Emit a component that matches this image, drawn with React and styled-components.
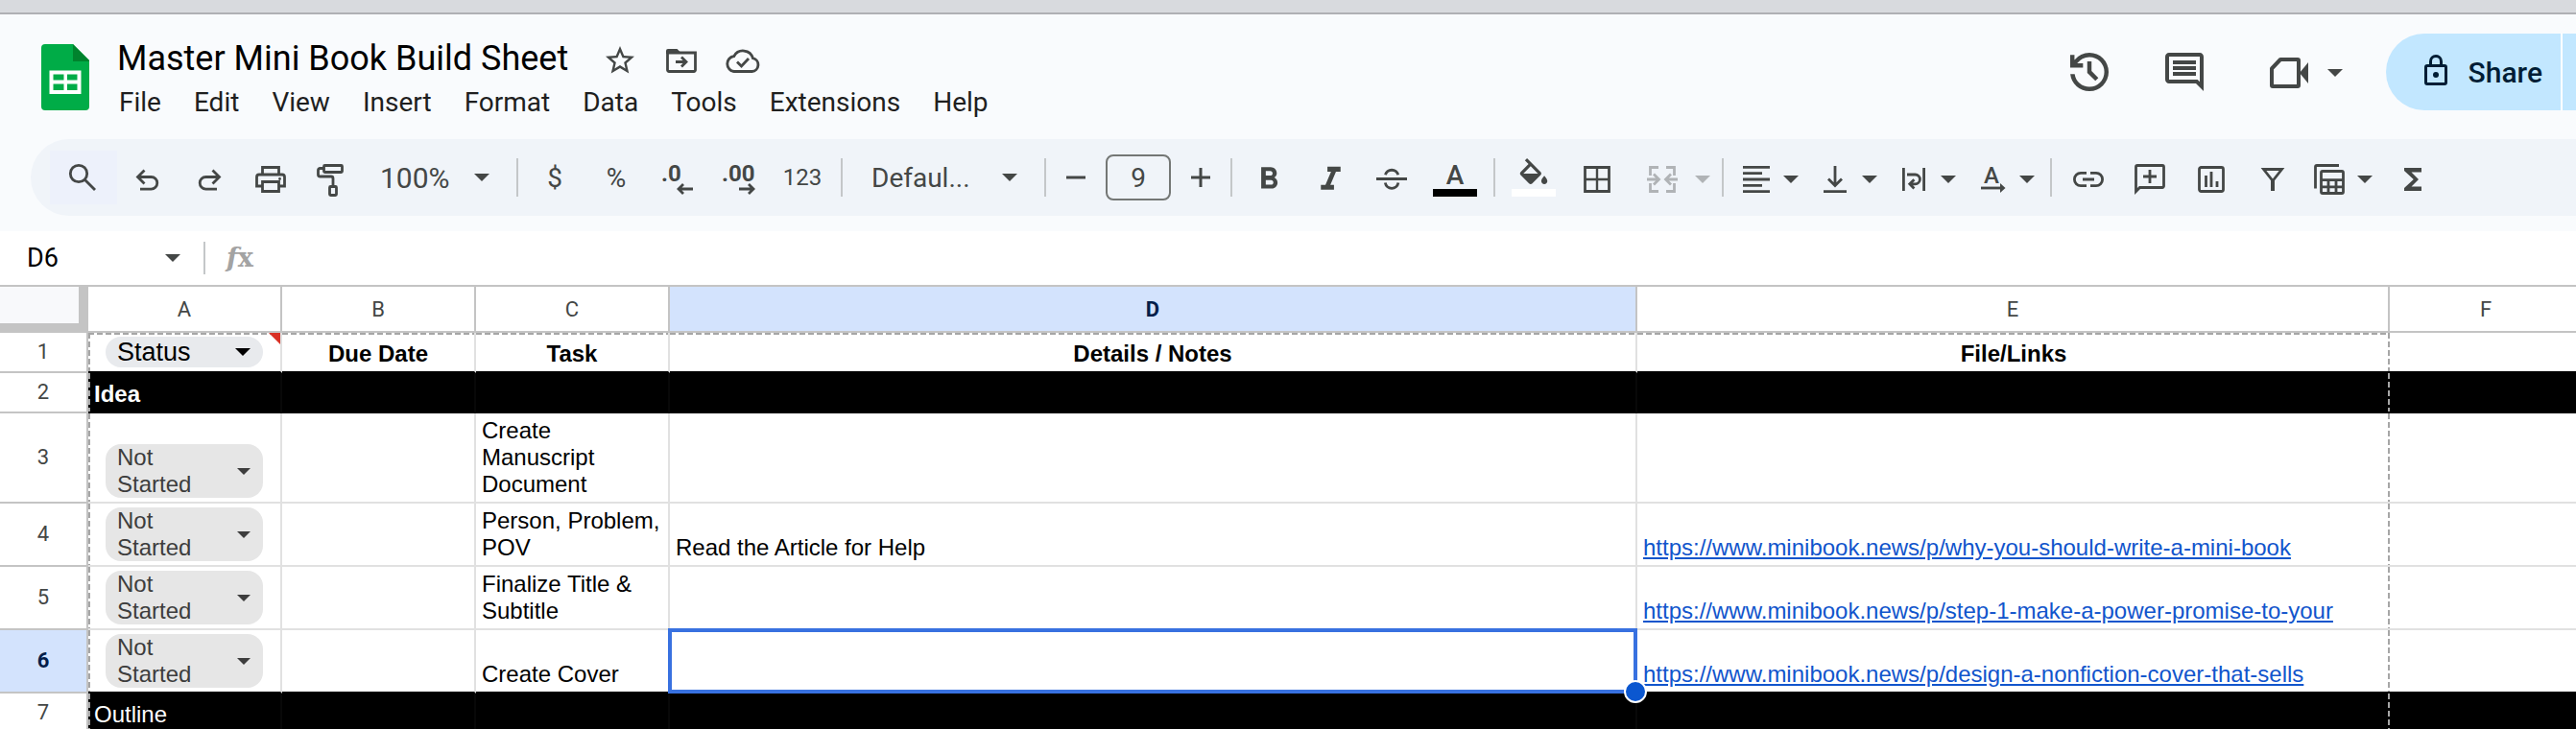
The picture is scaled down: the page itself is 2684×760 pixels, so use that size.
import React, { useState } from 'react';
import styled, { createGlobalStyle } from 'styled-components';
import { MdStarBorder, MdOutlineComment, MdFormatBold, MdFormatItalic, MdFunctions } from 'react-icons/md';

const menus = ['File', 'Edit', 'View', 'Insert', 'Format', 'Data', 'Tools', 'Extensions', 'Help'];

const rows = [
	{ n: 3, task: 'Create Manuscript Document' },
	{ n: 4, task: 'Person, Problem, POV', notes: 'Read the Article for Help', link: 'https://www.minibook.news/p/why-you-should-write-a-mini-book' },
	{ n: 5, task: 'Finalize Title & Subtitle', link: 'https://www.minibook.news/p/step-1-make-a-power-promise-to-your' },
	{ n: 6, task: 'Create Cover', link: 'https://www.minibook.news/p/design-a-nonfiction-cover-that-sells' },
];

const Glyph = styled.text`
	fill: currentColor;
	stroke: none;
	font-family: Roboto, sans-serif;
	font-size: 24px;
	font-weight: ${(p) => (p.$bold ? 700 : 500)};
`

// stroke icons on a 36 x 36 grid
const icons = {
	search: <><circle cx="13" cy="12" r="8.7" /><path d="M19 18l11 11" /></>,
	undo: <path d="M7.5 15.5H21.5a6.3 6.3 0 0 1 0 12.6H10M14.5 8.5l-7 7 7 7" />,
	redo: <path d="M28.5 15.5H14.5a6.3 6.3 0 0 0 0 12.6H26M21.5 8.5l7 7-7 7" />,
	print: <>
		<path d="M9.5 12.5V5.5H26.5V12.5M9.5 25H3.5V15.5a2.5 2.5 0 0 1 2.5-2.5H30a2.5 2.5 0 0 1 2.5 2.5V25H26.5" />
		<path d="M9.5 20.5h17v10h-17z" />
		<circle cx="27.5" cy="17.5" r="1.4" fill="currentColor" stroke="none" />
	</>,
	paint: <>
		<rect x="9.5" y="3.5" width="19" height="7" rx="1" />
		<path d="M9 6.5H5.5a2 2 0 0 0-2 2V13a2 2 0 0 0 2 2H17a2 2 0 0 1 2 2V25" />
		<rect x="15.5" y="25.5" width="7" height="9" rx="1" />
	</>,
	strike: <path d="M2 17.5H34M11.5 13.2a6.7 6 0 0 1 13.2 0M11.3 21.5a6.9 7 0 0 0 13.6 0" />,
	borders: <><path d="M5.5 5.5h25v25h-25z" /><path d="M18 5V31M5 18H31" strokeWidth="2.4" /></>,
	merge: <path d="M14 5.5H5.5V14M22 5.5H30.5V14M5.5 22V30.5H14M30.5 22V30.5H22M2 18H14M9 12.5l5.5 5.5-5.5 5.5M34 18H22M27 12.5l-5.5 5.5 5.5 5.5" />,
	align: <path d="M4 5.4H32M4 11.7H24M4 18H32M4 24.3H24M4 30.6H32" />,
	valign: <path d="M18 4V24M11 17.5l7 7 7-7M6 30.6H30" />,
	wrap: <path d="M7.4 6V30M28.6 6V30M11 13H19.5a4.9 4.9 0 0 1 0 9.8H14M18.4 18.2l-4.6 4.6 4.6 4.6" />,
	rotate: <>
		<Glyph x="17" y="22" textAnchor="middle">A</Glyph>
		<path d="M6 27H28" /><path d="M26 22l5.5 5-5.5 5z" fill="currentColor" stroke="none" />
	</>,
	lessDecimals: <><Glyph x="1" y="20" $bold>.0</Glyph><path d="M19.5 28H34M24 23l-5 5 5 5" /></>,
	moreDecimals: <><Glyph x="0" y="20" $bold>.00</Glyph><path d="M18 28H32.5M28 23l5 5-5 5" /></>,
	link: <path d="M16 11.4H10a6.6 6.6 0 0 0 0 13.2H16M20 11.4H26a6.6 6.6 0 0 1 0 13.2H20M12 18H24" />,
	addComment: <path d="M3.5 30.5V5a1.5 1.5 0 0 1 1.5-1.5H31A1.5 1.5 0 0 1 32.5 5V25a1.5 1.5 0 0 1-1.5 1.5H7.5ZM11 15H25M18 8V22" />,
	chart: <><rect x="5.5" y="5.5" width="25" height="25" rx="2" /><path d="M12.5 14V26M18 10V26M24 20V26" /></>,
	filter: <><path d="M8.5 7.5H27.5L18 19.5Z" /><path d="M18 19V30" strokeWidth="4" /></>,
	views: <>
		<path d="M2.5 27.5V5A1.5 1.5 0 0 1 4 3.5H27" />
		<rect x="8.5" y="9.5" width="23" height="23" rx="1.5" />
		<path d="M8 18.6H32M8 25.8H32M16 18V33M24 18V33" />
	</>,
};

function Icon({ name }) {
	return <StrokeSvg viewBox="0 0 36 36" aria-hidden="true">{icons[name]}</StrokeSvg>;
}

function Tool({ icon, label, children, ...rest }) {
	return (
		<ToolButton type="button" aria-label={label} {...rest}>
			{icon ? <Icon name={icon} /> : children}
		</ToolButton>
	);
}

function SplitTool({ icon, label, wide, disabled }) {
	return (
		<SplitButton type="button" aria-label={label} $wide={wide} disabled={disabled}>
			<Icon name={icon} />
			<Caret />
		</SplitButton>
	);
}

function Header() {
	return (
		<HeaderBar>
			<Logo viewBox="0 0 50 69" aria-label="Sheets">
				<path fill="#00ac47" d="M4 0H33L50 17V65a4 4 0 0 1-4 4H4a4 4 0 0 1-4-4V4a4 4 0 0 1 4-4Z" />
				<path fill="#00832d" d="M33 0L50 17V18H33Z" />
				<path fill="#fff" fillRule="evenodd" d="M8.5 27.5h33v24.5h-33ZM12.5 31.5v6h11v-6ZM27 31.5v6h10.5v-6ZM12.5 41.5v6.5h11v-6.5ZM27 41.5v6.5h10.5v-6.5Z" />
			</Logo>
			<Heading>
				<TitleRow>
					<Title>Master Mini Book Build Sheet</Title>
					<TitleButton type="button" aria-label="Star"><MdStarBorder size={36} /></TitleButton>
					<TitleButton type="button" aria-label="Move">
						<StrokeSvg viewBox="0 0 36 36">
							<path d="M3.5 27V10H32.5V28a1.5 1.5 0 0 1-1.5 1.5H5a1.5 1.5 0 0 1-1.5-1.5Z" />
							<path d="M2 11V8a2 2 0 0 1 2-2H13.5l4 4Z" fill="currentColor" stroke="none" />
							<path d="M12 19.5H22M18 14.5l5 5-5 5" />
						</StrokeSvg>
					</TitleButton>
					<TitleButton type="button" aria-label="Document status">
						<StrokeSvg viewBox="0 0 36 36">
							<path d="M9 29.5H27.5a7 7 0 0 0 1-13.8A10.7 10.7 0 0 0 8.8 13.6A8 8 0 0 0 9 29.5Z" />
							<path d="M12 19.5l4.5 4.5 7.5-8" />
						</StrokeSvg>
					</TitleButton>
				</TitleRow>
				<Menu>
					{menus.map((m) => <MenuItem key={m} type="button">{m}</MenuItem>)}
				</Menu>
			</Heading>
			<Actions>
				<ActionButton type="button" aria-label="Version history">
					<svg width="40" height="40" viewBox="120 -840 720 720" fill="currentColor">
						<path d="M480-120q-138 0-240.5-91.5T122-440h82q14 104 92.5 172T480-200q117 0 198.5-81.5T760-480q0-117-81.5-198.5T480-760q-69 0-129 32t-101 88h110v80H120v-240h80v94q51-64 124.5-99T480-840q75 0 140.5 28.5t114 77q48.5 48.5 77 114T840-480q0 75-28.5 140.5t-77 114q-48.5 48.5-114 77T480-120Zm112-192L440-464v-216h80v184l128 128-56 56Z" />
					</svg>
				</ActionButton>
				<ActionButton type="button" aria-label="Comments"><MdOutlineComment size={48} /></ActionButton>
				<MeetButton type="button" aria-label="Join a call">
					<svg width="42" height="34" viewBox="0 0 42 34" fill="none" stroke="currentColor" strokeWidth="4" strokeLinejoin="round">
						<path d="M12 3H30a1 1 0 0 1 1 1V30a1 1 0 0 1-1 1H4a1 1 0 0 1-1-1V12.5Z" />
						<path d="M32 17L41 6V28Z" fill="currentColor" stroke="none" />
					</svg>
					<Caret />
				</MeetButton>
				<ShareButton type="button">
					<svg width="24" height="32" viewBox="0 0 24 32" fill="none" stroke="currentColor" strokeWidth="3">
						<rect x="1.5" y="11.5" width="21" height="19" rx="1.5" />
						<path d="M6.5 11V7a5.5 5.5 0 0 1 11 0V11" />
						<circle cx="12" cy="21" r="3" fill="currentColor" stroke="none" />
					</svg>
					Share
				</ShareButton>
				<ShareMore type="button" aria-label="Sharing options" />
			</Actions>
		</HeaderBar>
	);
}

function Toolbar() {
	const [size, setSize] = useState('9');

	return (
		<ToolbarPill role="toolbar">
			<Tool icon="search" label="Search the menus" $width={70} $tint />
			<Tool icon="undo" label="Undo" />
			<Tool icon="redo" label="Redo" />
			<Tool icon="print" label="Print" />
			<Tool icon="paint" label="Paint format" />
			<SelectBox $width={154}>
				<ZoomSelect aria-label="Zoom" defaultValue="100%"><option>100%</option></ZoomSelect>
				<Caret />
			</SelectBox>
			<Divider />
			<TextTool type="button">$</TextTool>
			<TextTool type="button">%</TextTool>
			<Tool icon="lessDecimals" label="Decrease decimal places" />
			<Tool icon="moreDecimals" label="Increase decimal places" />
			<TextTool type="button" $small>123</TextTool>
			<Divider />
			<SelectBox $width={198}>
				<FontSelect aria-label="Font" defaultValue="Defaul..."><option>Defaul...</option></FontSelect>
				<Caret />
			</SelectBox>
			<Divider />
			<StepButton type="button" aria-label="Decrease font size">
				<svg width="20" height="20" viewBox="0 0 20 20"><path d="M0 10H20" stroke="currentColor" strokeWidth="3" /></svg>
			</StepButton>
			<SizeInput aria-label="Font size" value={size} onChange={(e) => setSize(e.target.value)} />
			<StepButton type="button" aria-label="Increase font size">
				<svg width="20" height="20" viewBox="0 0 20 20"><path d="M0 10H20M10 0V20" stroke="currentColor" strokeWidth="3" /></svg>
			</StepButton>
			<Divider />
			<Tool label="Bold"><MdFormatBold size={38} /></Tool>
			<Tool label="Italic"><MdFormatItalic size={41} /></Tool>
			<Tool icon="strike" label="Strikethrough" />
			<ColorButton type="button" aria-label="Text color" $color="#000">
				<ColorLetter>A</ColorLetter>
			</ColorButton>
			<Divider />
			<ColorButton type="button" aria-label="Fill color" $color="#fff">
				<svg width="38" height="27" viewBox="0 0 24 17" fill="currentColor">
					<path d="M16.56 8.94L7.62 0 6.21 1.41l2.38 2.38-5.15 5.15c-.59.59-.59 1.54 0 2.12l5.5 5.5c.29.29.68.44 1.06.44s.77-.15 1.06-.44l5.5-5.5c.59-.58.59-1.53 0-2.12zM5.21 10L10 5.21 14.79 10H5.21zM19 11.5s-2 2.17-2 3.5c0 1.1.9 2 2 2s2-.9 2-2c0-1.33-2-3.5-2-3.5z" />
				</svg>
			</ColorButton>
			<Tool icon="borders" label="Borders" />
			<SplitTool icon="merge" label="Merge cells" wide disabled />
			<Divider />
			<SplitTool icon="align" label="Horizontal align" />
			<SplitTool icon="valign" label="Vertical align" />
			<SplitTool icon="wrap" label="Text wrapping" />
			<SplitTool icon="rotate" label="Text rotation" />
			<Divider />
			<Tool icon="link" label="Insert link" />
			<Tool icon="addComment" label="Insert comment" />
			<Tool icon="chart" label="Insert chart" />
			<Tool icon="filter" label="Create a filter" />
			<SplitTool icon="views" label="Table views" />
			<Tool label="Functions"><MdFunctions size={36} /></Tool>
		</ToolbarPill>
	);
}

function BlackRow({ n, title, bold }) {
	return (
		<tr>
			<RowHead scope="row">{n}</RowHead>
			<Cell $black $bold={bold} $dashLeft>{title}</Cell>
			<Cell $black /><Cell $black /><Cell $black />
			<Cell $black $dashRight /><Cell $black />
		</tr>
	);
}

function Sheet() {
	return (
		<SheetWrap>
			<Table>
				<colgroup>
					<Col $w={92} /><Col $w={202} /><Col $w={202} /><Col $w={202} />
					<Col $w={1008} /><Col $w={784} /><col />
				</colgroup>
				<thead>
					<tr>
						<Corner />
						{['A', 'B', 'C', 'D', 'E', 'F'].map((c) => (
							<ColHead key={c} scope="col" $active={c === 'D'}>{c}</ColHead>
						))}
					</tr>
				</thead>
				<tbody>
					<tr>
						<RowHead scope="row">1</RowHead>
						<Cell $dashTop $dashLeft $chip $last>
							<StatusChip type="button">Status<Caret /></StatusChip>
							<NoteMark />
						</Cell>
						<Cell $dashTop $center $bold $last>Due Date</Cell>
						<Cell $dashTop $center $bold $last>Task</Cell>
						<Cell $dashTop $center $bold $last>Details / Notes</Cell>
						<Cell $dashTop $dashRight $center $bold $last>File/Links</Cell>
						<Cell $last />
					</tr>
					<BlackRow n={2} title="Idea" bold />
					{rows.map((r) => {
						const last = r.n === 6;
						return (
							<tr key={r.n}>
								<RowHead scope="row" $active={last}>{r.n}</RowHead>
								<Cell $dashLeft $chip $last={last}>
									<Chip type="button"><span>Not Started</span><Caret $small /></Chip>
								</Cell>
								<Cell $last={last} />
								<Cell $last={last}>{r.task}</Cell>
								<Cell $last={last}>
									{r.notes}
									{last && <Selection />}
								</Cell>
								<Cell $dashRight $last={last}>
									{r.link && <CellLink href={r.link}>{r.link}</CellLink>}
								</Cell>
								<Cell $last={last} />
							</tr>
						);
					})}
					<BlackRow n={7} title="Outline" />
				</tbody>
			</Table>
		</SheetWrap>
	);
}

function App() {
	return (
		<Page>
			<GlobalStyle />
			<WindowEdge />
			<Header />
			<Toolbar />
			<FormulaBar>
				<NameBox aria-label="Name box" defaultValue="D6" />
				<Caret />
				<FormulaDivider />
				<Fx><i>f</i>x</Fx>
			</FormulaBar>
			<Sheet />
		</Page>
	);
}

export default App;

const GlobalStyle = createGlobalStyle`
	* {
		box-sizing: border-box;
	}
	body {
		margin: 0;
		background: #f9fbfd;
	}
	button, select, input {
		font: inherit;
		color: inherit;
		border: none;
		background: none;
		padding: 0;
		margin: 0;
	}
	svg {
		display: block;
		flex: none;
	}
`

const Page = styled.div`
	display: flex;
	flex-direction: column;
	height: 100vh;
	overflow: hidden;
	font-family: Roboto, "Liberation Sans", sans-serif;
	font-size: 28px;
	color: #444746;
`

const WindowEdge = styled.div`
	flex: none;
	height: 15px;
	background: #d8dade;
	border-bottom: 2px solid #afb0b4;
`

const StrokeSvg = styled.svg`
	width: 36px;
	height: 36px;
	fill: none;
	stroke: currentColor;
	stroke-width: 2.8;
	overflow: visible;
`

const Caret = styled.span`
	flex: none;
	width: 0;
	height: 0;
	border-style: solid;
	border-width: ${(p) => (p.$small ? '7px 7px 0' : '8px 8px 0')};
	border-color: currentColor transparent transparent;
`

const HeaderBar = styled.header`
	flex: none;
	display: flex;
	align-items: flex-start;
	padding: 20px 0 20px 43px;
`

const Logo = styled.svg`
	width: 50px;
	height: 69px;
	margin-top: 11px;
`

const Heading = styled.div`
	padding: 4px 0 0 28px;
`

const TitleRow = styled.div`
	display: flex;
	align-items: center;
	margin-bottom: 6px;
`

const Title = styled.h1`
	margin: 0 22px 0 0;
	padding-left: 1px;
	font-size: 36px;
	line-height: 44px;
	font-weight: 400;
	color: #000;
	white-space: nowrap;
`

const TitleButton = styled.button`
	display: flex;
	justify-content: center;
	padding-top: 4px;
	width: 64px;
`

const Menu = styled.nav`
	display: flex;
	gap: 34px;
	padding-left: 3px;
`

const MenuItem = styled.button`
	line-height: 36px;
	color: #1f1f1f;
`

const Actions = styled.div`
	display: flex;
	align-items: center;
	margin-left: auto;
`

const ActionButton = styled.button`
	display: flex;
	align-items: center;
	justify-content: center;
	width: 99px;
	height: 80px;
`

const MeetButton = styled.button`
	display: flex;
	align-items: center;
	gap: 19px;
	padding: 2px 45px 0 38px;
`

const ShareButton = styled.button`
	display: flex;
	align-items: center;
	gap: 22px;
	height: 80px;
	padding: 0 19px 0 40px;
	border-radius: 40px 0 0 40px;
	background: #c2e7ff;
	color: #001d35;
	font-size: 30px;
	font-weight: 500;

	svg {
		margin-bottom: 4px;
	}
`

const ShareMore = styled.button`
	width: 16px;
	height: 80px;
	background: #c2e7ff;
	border-left: 2px solid #fff;
`

const ToolbarPill = styled.div`
	flex: none;
	display: flex;
	align-items: center;
	height: 80px;
	margin: 0 0 16px 32px;
	padding-left: 20px;
	border-radius: 40px 0 0 40px;
	background: #f0f4f9;
`

const ToolButton = styled.button`
	flex: none;
	display: flex;
	align-items: center;
	justify-content: center;
	width: ${(p) => p.$width || 64}px;
	height: 56px;
	padding-top: 4px;
	background: ${(p) => (p.$tint ? '#edf1fb' : 'none')};
`

const TextTool = styled.button`
	flex: none;
	width: ${(p) => (p.$small ? 68 : 64)}px;
	height: 56px;
	font-size: ${(p) => (p.$small ? 24 : 28)}px;
`

const SplitButton = styled.button`
	flex: none;
	display: flex;
	align-items: center;
	gap: ${(p) => (p.$wide ? 16 : 10)}px;
	height: 56px;
	padding: ${(p) => (p.$wide ? '4px 6px 0 18px' : '4px 10px 0')};

	&:disabled {
		color: #b0b3b6;
	}
`

const Divider = styled.span`
	flex: none;
	width: 2px;
	height: 40px;
	margin: 0 6px;
	background: #c4c7c9;
`

const SelectBox = styled.span`
	flex: none;
	display: flex;
	align-items: center;
	width: ${(p) => p.$width}px;
	padding-right: 22px;
`

const ZoomSelect = styled.select`
	appearance: none;
	flex: 1;
	min-width: 0;
	padding-left: 18px;
	font-size: 30px;
`

const FontSelect = styled.select`
	appearance: none;
	flex: 1;
	min-width: 0;
	padding-left: 24px;
`

const StepButton = styled.button`
	flex: none;
	display: flex;
	align-items: center;
	justify-content: center;
	width: 50px;
	height: 56px;
`

const SizeInput = styled.input`
	flex: none;
	width: 68px;
	height: 48px;
	margin: 0 6px;
	border: 2px solid #747775;
	border-radius: 8px;
	text-align: center;
`

const ColorButton = styled.button`
	flex: none;
	display: flex;
	flex-direction: column;
	align-items: center;
	width: 68px;

	&::after {
		content: '';
		width: 46px;
		height: 8px;
		margin-top: 5px;
		background: ${(p) => p.$color};
	}
`

const ColorLetter = styled.span`
	height: 27px;
	line-height: 35px;
	font-weight: 500;
`

const FormulaBar = styled.div`
	flex: none;
	display: flex;
	align-items: center;
	height: 56px;
	background: #fff;
`

const NameBox = styled.input`
	width: 172px;
	padding-left: 28px;
	font-size: 27px;
	color: #000;
`

const FormulaDivider = styled.span`
	width: 2px;
	height: 34px;
	margin: 0 22px 0 24px;
	background: #c4c7c9;
`

const Fx = styled.span`
	font-family: "DejaVu Serif", serif;
	font-size: 27px;
	line-height: 36px;
	font-weight: 700;
	color: #a3a3a3;
`

const SheetWrap = styled.main`
	flex: 1;
	min-height: 0;
	overflow: hidden;
	background: #fff;
	border-top: 2px solid #c4c4c4;
`

// the last column runs on past the window edge
const Table = styled.table`
	width: calc(100% + 8px);
	table-layout: fixed;
	border-spacing: 0;
`

const Col = styled.col`
	width: ${(p) => p.$w}px;
`

const Corner = styled.td`
	height: 48px;
	background: #f8f9fb;
	border: solid #c4c4c4;
	border-width: 0 10px 10px 0;
`

const ColHead = styled.th`
	padding: 0;
	font-size: 22px;
	font-weight: ${(p) => (p.$active ? 700 : 400)};
	color: ${(p) => (p.$active ? '#041e49' : '#444746')};
	background: ${(p) => (p.$active ? '#d3e3fd' : '#fff')};
	border: solid #c4c4c4;
	border-width: 0 2px 2px 0;
`

const RowHead = styled.th`
	height: 42px;
	padding: 0 0 2px;
	font-size: 22px;
	font-weight: ${(p) => (p.$active ? 700 : 400)};
	color: ${(p) => (p.$active ? '#041e49' : '#444746')};
	background: ${(p) => (p.$active ? '#d3e3fd' : '#fff')};
	border: solid #c4c4c4;
	border-width: 0 2px 2px 0;
`

// dashed lines mark the edges of the filtered range
const dashX = 'repeating-linear-gradient(90deg, #a6a6a6 0 6px, transparent 6px 9px) left top / 100% 2px no-repeat'
const dashY = (side) => `repeating-linear-gradient(#a6a6a6 0 6px, transparent 6px 9px) ${side} top / 2px 100% no-repeat`

const Cell = styled.td`
	position: relative;
	padding: 4px ${(p) => (p.$chip ? '18px' : '6px')};
	vertical-align: bottom;
	text-align: ${(p) => (p.$center ? 'center' : 'left')};
	font-family: "Liberation Sans", Arial, sans-serif;
	font-size: 24px;
	line-height: 28px;
	font-weight: ${(p) => (p.$bold ? 700 : 400)};
	color: ${(p) => (p.$black ? '#fff' : '#000')};
	border: solid #e1e1e1;
	border-width: 0 ${(p) => (p.$dashRight ? 0 : '2px')} 2px 0;
	border-right-color: ${(p) => (p.$black ? '#080808' : '#e1e1e1')};
	border-bottom-color: ${(p) => (p.$black || p.$last ? '#000' : '#e1e1e1')};
	background: ${(p) => [
		p.$dashTop && dashX,
		p.$dashLeft && dashY('left'),
		p.$dashRight && dashY('right'),
		`linear-gradient(${p.$black ? '#000, #000' : '#fff, #fff'})`,
	].filter(Boolean).join(', ')};
`

const Chip = styled.button`
	display: flex;
	align-items: center;
	justify-content: space-between;
	width: 100%;
	padding: 0 13px 0 12px;
	border-radius: 16px;
	background: #e6e6e6;
	color: #3d3d3d;
	text-align: left;

	span:first-child {
		width: 90px;
	}
`

const StatusChip = styled(Chip)`
	height: 32px;
	border-radius: 16px;
	background: #e8eaed;
	color: #000;
	font-size: 27px;

	span:first-child {
		width: 0;
	}
`

const NoteMark = styled.span`
	position: absolute;
	top: 0;
	right: 0;
	border-style: solid;
	border-width: 0 12px 12px 0;
	border-color: transparent #d93025 transparent transparent;
`

const CellLink = styled.a`
	color: #1155cc;
`

const Selection = styled.span`
	position: absolute;
	z-index: 1;
	top: -2px;
	left: -2px;
	right: -2px;
	bottom: -2px;
	border: 4px solid #3871e0;

	&::after {
		content: '';
		position: absolute;
		right: -14px;
		bottom: -14px;
		width: 20px;
		height: 20px;
		border: 2px solid #fff;
		border-radius: 50%;
		background: #0b57d0;
	}
`
